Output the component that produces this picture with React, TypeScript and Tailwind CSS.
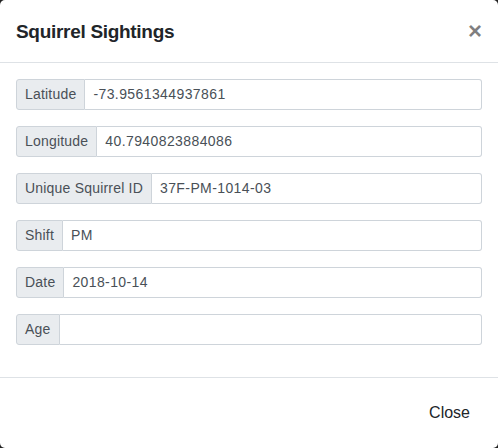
const fields = [
  { label: 'Latitude', value: '-73.9561344937861' },
  { label: 'Longitude', value: '40.7940823884086' },
  { label: 'Unique Squirrel ID', value: '37F-PM-1014-03' },
  { label: 'Shift', value: 'PM' },
  { label: 'Date', value: '2018-10-14' },
  { label: 'Age', value: '' },
];

const App = () => {
  return (
    <div className="w-[498px] h-[448px] bg-[#222] overflow-hidden font-['Liberation_Sans',Arial,sans-serif]">
      <div className="h-full bg-white rounded-[5px] flex flex-col text-[#212529]">
        <div className="flex items-center justify-between px-4 h-[63px] border-b border-[#dee2e6]">
          <h5 className="text-[19px] font-bold leading-[30px] tracking-[-0.3px] pt-[1px]">Squirrel Sightings</h5>
          <button className="text-[24px] font-bold leading-none text-black/50 pb-[1px]">×</button>
        </div>
        <div className="flex flex-col gap-4 pt-4 pb-8 px-4 border-b border-[#dee2e6]">
          {fields.map((f) => (
            <div key={f.label} className="flex h-[31px] text-[14px]">
              <span className="flex items-center px-2 bg-[#e9ecef] border border-[#ced4da] rounded-l-[3px] text-[#495057] font-medium tracking-[0.2px]">
                {f.label}
              </span>
              <input
                readOnly
                value={f.value}
                className="flex-1 min-w-0 px-2 border border-l-0 border-[#ced4da] rounded-r-[3px] text-[#495057] outline-none tracking-[0.4px]"
              />
            </div>
          ))}
        </div>
        <div className="flex justify-end items-center px-3 py-4 flex-1">
          <button className="mx-1 px-3 h-[38px] text-[16px] text-[#212529]">Close</button>
        </div>
      </div>
    </div>
  );
};

export default App;
